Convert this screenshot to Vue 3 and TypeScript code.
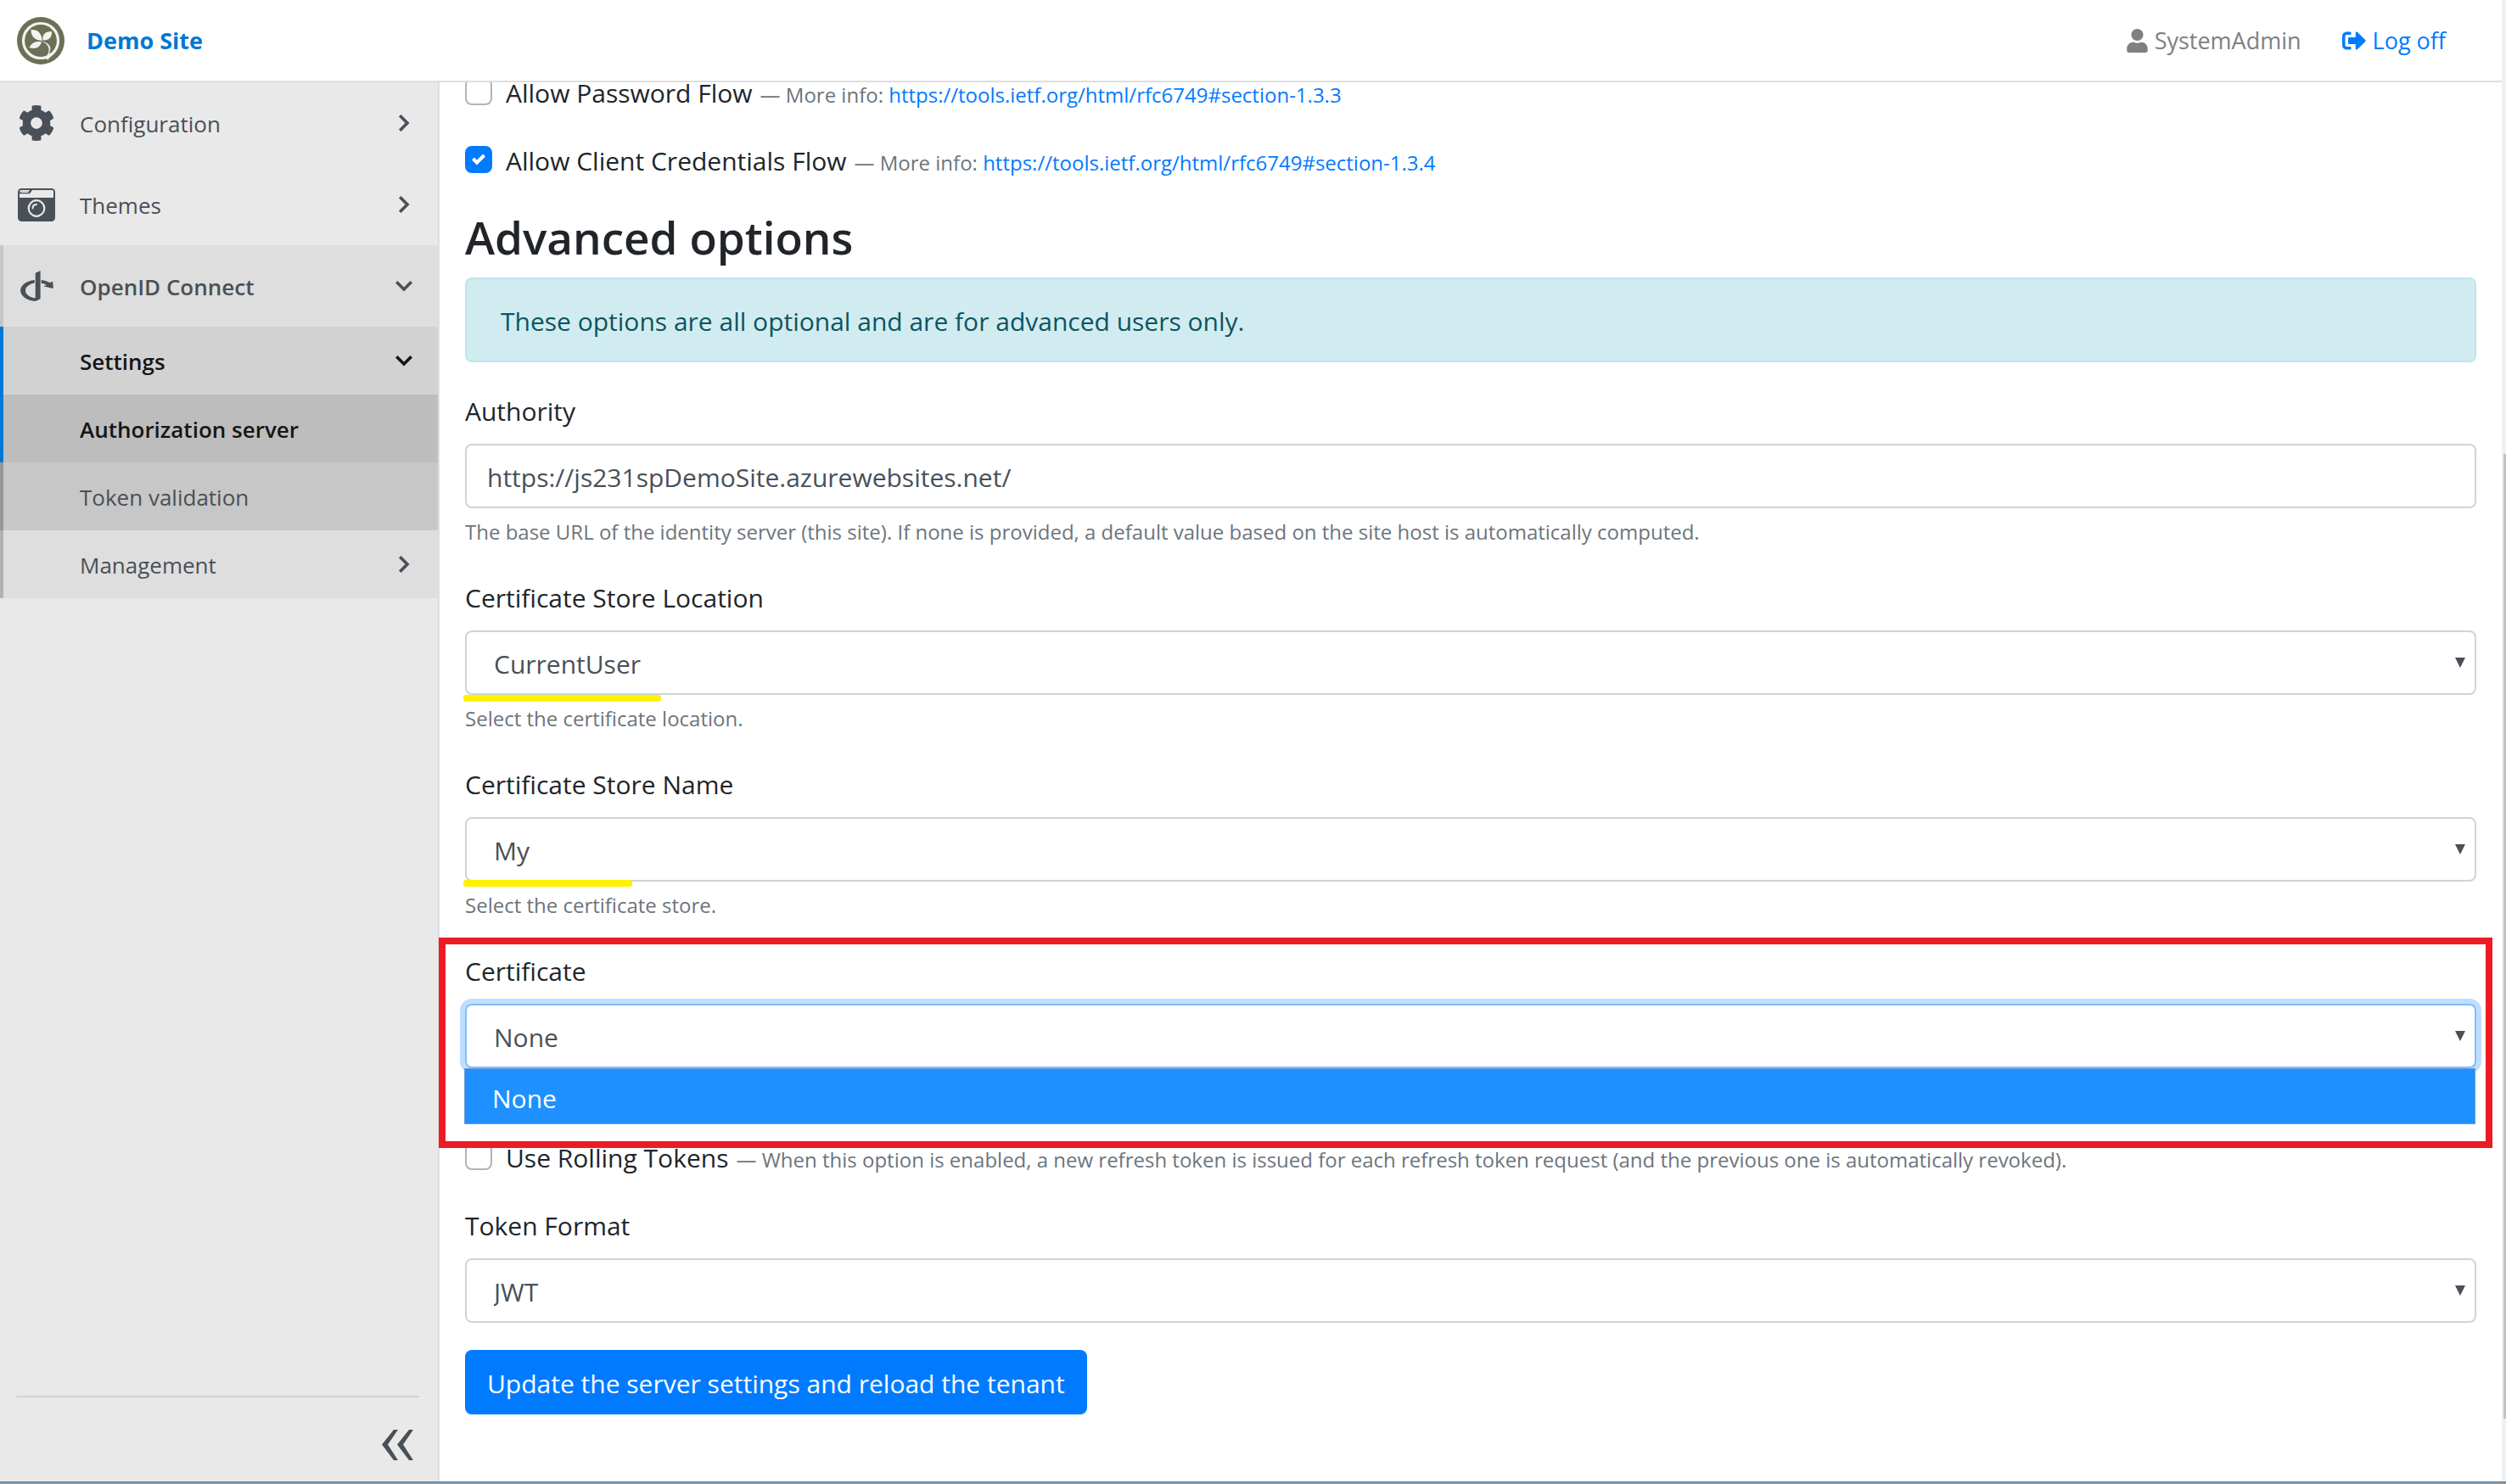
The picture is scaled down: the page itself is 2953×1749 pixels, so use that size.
<script setup lang="ts">
import { ref } from 'vue'

interface NavItem {
  label: string
  level: 'top' | 'sub' | 'leaf'
  icon?: 'gear' | 'camera' | 'openid'
  chevron?: 'right' | 'down'
  tone: string
}

interface Option {
  id: string
  label: string
  values: string[]
  hint?: string
  mark?: 'mark-wide' | 'mark-short'
}

const nav: NavItem[] = [
  { label: 'Configuration', level: 'top', icon: 'gear', chevron: 'right', tone: 'plain' },
  { label: 'Themes', level: 'top', icon: 'camera', chevron: 'right', tone: 'plain' },
  { label: 'OpenID Connect', level: 'top', icon: 'openid', chevron: 'down', tone: 'open' },
  { label: 'Settings', level: 'sub', chevron: 'down', tone: 'active' },
  { label: 'Authorization server', level: 'leaf', tone: 'current' },
  { label: 'Token validation', level: 'leaf', tone: 'sibling' },
  { label: 'Management', level: 'sub', chevron: 'right', tone: 'muted' },
]

const stores: Option[] = [
  { id: 'store-location', label: 'Certificate Store Location', values: ['CurrentUser', 'LocalMachine'], hint: 'Select the certificate location.', mark: 'mark-wide' },
  { id: 'store-name', label: 'Certificate Store Name', values: ['My', 'Root'], hint: 'Select the certificate store.', mark: 'mark-short' },
]

const passwordFlow = ref(false)
const clientFlow = ref(true)
const rolling = ref(false)
const authority = ref('https://js231spDemoSite.azurewebsites.net/')
</script>

<template>
  <div class="window">
    <div class="app">
      <header class="topbar">
        <a class="brand" href="#">
          <svg class="logo" viewBox="0 0 56 56" aria-hidden="true">
            <circle cx="28" cy="28" r="28" fill="#6b7056" />
            <circle cx="28" cy="28" r="20.5" fill="none" stroke="#f1f4ee" stroke-width="3.2" />
            <path d="M29.5 28C20 27.500 16.500 22 16.500 15C24 14.500 29.500 19 29.500 28Z" fill="#f1f4ee" />
            <path d="M30.500 27.500C29.500 21 33 17 41 17C41.500 24 37.500 28 30.500 27.500Z" fill="#f1f4ee" />
            <path d="M29 29.500C27 36 22 38.500 14.500 36C17.500 30.500 22 28 29 29.500Z" fill="#f1f4ee" />
            <path d="M29 28.500C38 30 42 36 37.500 43.500L44 41L36 51L34 47C40 40 39 33 29 28.500Z" fill="#f1f4ee" />
          </svg>
          <span>Demo Site</span>
        </a>
        <div class="account">
          <span class="user">
            <svg width="25" height="28" viewBox="0 0 448 512" fill="currentColor" aria-hidden="true"><path d="M224 256c70.700 0 128-57.300 128-128S294.700 0 224 0 96 57.300 96 128s57.300 128 128 128zm89.600 32h-16.700c-22.200 10.200-46.900 16-72.900 16s-50.600-5.800-72.900-16h-16.700C60.200 288 0 348.200 0 422.400V464c0 26.500 21.500 48 48 48h352c26.500 0 48-21.500 48-48v-41.600c0-74.200-60.200-134.400-134.400-134.400z" /></svg>
            SystemAdmin
          </span>
          <a class="logoff" href="#">
            <svg width="28" height="28" viewBox="0 0 512 512" fill="currentColor" aria-hidden="true"><path d="M497 273L329 441c-15 15-41 4.500-41-17v-96H152c-13.300 0-24-10.700-24-24v-96c0-13.300 10.700-24 24-24h136V88c0-21.400 25.900-32 41-17l168 168c9.300 9.400 9.300 24.600 0 34zM192 436v-40c0-6.600-5.400-12-12-12H96c-17.700 0-32-14.300-32-32V160c0-17.700 14.300-32 32-32h84c6.600 0 12-5.400 12-12V76c0-6.600-5.400-12-12-12H96c-53 0-96 43-96 96v192c0 53 43 96 96 96h84c6.600 0 12-5.400 12-12z" /></svg>
            Log off
          </a>
        </div>
      </header>

      <div class="body">
        <aside class="sidebar">
          <nav>
            <a v-for="item in nav" :key="item.label" href="#" class="item" :class="[item.level, item.tone]">
              <span class="glyph">
                <svg v-if="item.icon === 'gear'" width="42" height="42" viewBox="8 8 496 496" fill="currentColor" aria-hidden="true"><path d="M487.400 315.700l-42.600-24.600c4.300-23.200 4.300-47 0-70.200l42.600-24.600c4.900-2.800 7.100-8.600 5.500-14-11.100-35.600-30-67.800-54.700-94.600-3.800-4.100-10-5.100-14.800-2.300L380.800 110c-17.900-15.400-38.500-27.300-60.800-35.100V25.800c0-5.600-3.900-10.500-9.400-11.700-36.700-8.200-74.300-7.800-109.200 0-5.500 1.200-9.400 6.100-9.400 11.700V75c-22.200 7.900-42.800 19.800-60.800 35.100L88.700 85.500c-4.900-2.800-11-1.900-14.800 2.300-24.700 26.700-43.600 58.900-54.700 94.600-1.700 5.400.6 11.200 5.500 14L67.300 221c-4.300 23.200-4.300 47 0 70.200l-42.600 24.600c-4.900 2.800-7.100 8.600-5.500 14 11.100 35.600 30 67.800 54.700 94.600 3.800 4.100 10 5.100 14.800 2.300l42.600-24.600c17.900 15.400 38.500 27.300 60.800 35.100v49.200c0 5.600 3.900 10.500 9.400 11.700 36.700 8.200 74.300 7.800 109.200 0 5.500-1.200 9.400-6.100 9.400-11.700v-49.200c22.200-7.900 42.800-19.800 60.800-35.100l42.600 24.600c4.900 2.800 11 1.900 14.800-2.300 24.700-26.700 43.600-58.900 54.700-94.600 1.500-5.500-.7-11.300-5.600-14.100zM256 336c-44.100 0-80-35.900-80-80s35.900-80 80-80 80 35.900 80 80-35.900 80-80 80z" /></svg>
                <svg v-else-if="item.icon === 'camera'" width="44" height="39" viewBox="0 0 44 39" aria-hidden="true">
                  <rect width="44" height="39" rx="4.500" fill="#495057" />
                  <path d="M4 2H40Q42 2 42 4V11H2V4Q2 2 4 2Z" fill="#e9e9e9" />
                  <path d="M2 6.300H14L17 2H14L13 3.500H4L2 4.500Z" fill="#495057" />
                  <path d="M3.500 3.500H13L12 5H3.500Z" fill="#e9e9e9" />
                  <circle cx="22" cy="23.500" r="9.300" fill="none" stroke="#e9e9e9" stroke-width="2.200" />
                  <path d="M17.500 23.500Q17.500 19 22 19" fill="none" stroke="#e9e9e9" stroke-width="2" stroke-linecap="round" />
                </svg>
                <svg v-else-if="item.icon === 'openid'" width="39" height="36" viewBox="0 48 448 416" fill="currentColor" aria-hidden="true"><path d="M271.500 432l-68 32C88.500 453.700 0 392.500 0 318.200c0-71.500 82.500-131 191.700-144.300v43c-71.500 12.500-124 53-124 101.300 0 51 58.500 93.300 135.700 103v-340l68-33.200v384zM448 291l-131.300-28.500 36.800-20.700c-19.500-11.500-43.500-20-70-24.800v-43c46.200 5.500 87.700 19.500 120.300 39.300l35-19.800L448 291z" /></svg>
              </span>
              <span class="text">{{ item.label }}</span>
              <svg v-if="item.chevron" class="chevron" :class="item.chevron" width="20" height="20" viewBox="0 0 20 20" fill="none" stroke="currentColor" stroke-width="3.600" stroke-linecap="square" aria-hidden="true">
                <path v-if="item.chevron === 'right'" d="M6.500 2.500L14 10L6.500 17.500" />
                <path v-else d="M2.500 6.500L10 14L17.500 6.500" />
              </svg>
            </a>
          </nav>
          <div class="collapse">
            <button type="button" aria-label="Collapse menu">
              <svg width="37" height="36" viewBox="0 0 37 36" fill="#495057" aria-hidden="true"><path d="M14 0H19L7 17.500L19 36H14L0 17.500ZM32 0H37L25 17.500L37 36H32L18 17.500Z" /></svg>
            </button>
          </div>
        </aside>

        <main class="content">
          <form @submit.prevent>
            <div class="check-row">
              <span class="box"><input id="pw" v-model="passwordFlow" type="checkbox" /></span>
              <label for="pw">Allow Password Flow</label>
              <span class="hint">— More info: <a href="https://tools.ietf.org/html/rfc6749#section-1.3.3">https://tools.ietf.org/html/rfc6749#section-1.3.3</a></span>
            </div>
            <div class="check-row">
              <span class="box">
                <input id="cc" v-model="clientFlow" type="checkbox" />
                <svg v-if="clientFlow" width="16" height="16" viewBox="0 0 8 8" fill="#fff" aria-hidden="true"><path d="M6.564.75l-3.590 3.612-1.538-1.550L0 4.260 2.974 7.250 8 2.193z" /></svg>
              </span>
              <label for="cc">Allow Client Credentials Flow</label>
              <span class="hint">— More info: <a href="https://tools.ietf.org/html/rfc6749#section-1.3.4">https://tools.ietf.org/html/rfc6749#section-1.3.4</a></span>
            </div>

            <h3>Advanced options</h3>
            <div class="alert" role="alert">These options are all optional and are for advanced users only.</div>

            <div class="group">
              <label for="authority">Authority</label>
              <input id="authority" v-model="authority" class="control" type="text" />
              <p class="hint">The base URL of the identity server (this site). If none is provided, a default value based on the site host is automatically computed.</p>
            </div>

            <div v-for="store in stores" :key="store.id" class="group">
              <label :for="store.id">{{ store.label }}</label>
              <div class="picker">
                <select :id="store.id" class="control">
                  <option v-for="value in store.values" :key="value">{{ value }}</option>
                </select>
                <svg class="arrow" width="12" height="12" viewBox="0 0 12 12" aria-hidden="true"><path d="M0 0H12L6 12Z" fill="#495057" /></svg>
                <span class="mark" :class="store.mark"></span>
              </div>
              <p class="hint">{{ store.hint }}</p>
            </div>

            <div class="group framed">
              <label for="certificate">Certificate</label>
              <div class="picker">
                <select id="certificate" class="control focused">
                  <option>None</option>
                </select>
                <svg class="arrow" width="12" height="12" viewBox="0 0 12 12" aria-hidden="true"><path d="M0 0H12L6 12Z" fill="#495057" /></svg>
                <div class="menu" role="listbox" aria-label="Certificate">
                  <div role="option" aria-selected="true">None</div>
                </div>
              </div>
            </div>

            <div class="check-row">
              <span class="box"><input id="rolling" v-model="rolling" type="checkbox" /></span>
              <label for="rolling">Use Rolling Tokens</label>
              <span class="hint">— When this option is enabled, a new refresh token is issued for each refresh token request (and the previous one is automatically revoked).</span>
            </div>

            <div class="group">
              <label for="format">Token Format</label>
              <div class="picker">
                <select id="format" class="control">
                  <option>JWT</option>
                  <option>Encrypted</option>
                </select>
                <svg class="arrow" width="12" height="12" viewBox="0 0 12 12" aria-hidden="true"><path d="M0 0H12L6 12Z" fill="#495057" /></svg>
              </div>
            </div>

            <button class="submit" type="submit">Update the server settings and reload the tenant</button>
          </form>
        </main>
      </div>
    </div>
    <div class="scrollbar" aria-hidden="true">
      <div class="before"></div>
      <div class="thumb"></div>
      <div class="after"></div>
    </div>
  </div>
</template>

<style>
body {
  margin: 0;
  overflow: hidden;
}
</style>

<style scoped>
* {
  box-sizing: border-box;
}

.window {
  display: flex;
  height: 100vh;
  border-bottom: 2px solid #999;
  box-shadow: inset 0 -1px #1e87d9;
  padding-bottom: 1px;
  font-family: 'Open Sans', 'Noto Sans', sans-serif;
  font-size: 30px;
  line-height: 48px;
  color: #212529;
  background: #fff;
}

a {
  color: #007bff;
  text-decoration: none;
}

.app {
  flex: 1;
  min-width: 0;
  display: flex;
  flex-direction: column;
}

.topbar {
  flex: none;
  position: relative;
  z-index: 2;
  display: flex;
  align-items: center;
  justify-content: space-between;
  height: 97px;
  padding: 0 66px 0 20px;
  border-bottom: 2px solid #dedede;
  background: #fff;
  font-size: 27px;
}

.brand,
.account,
.user,
.logoff {
  display: flex;
  align-items: center;
}

.brand {
  gap: 26px;
  color: #0078d4;
  font-weight: 700;
}

.logo {
  width: 56px;
  height: 56px;
}

.account {
  gap: 48px;
}

.user,
.logoff {
  gap: 8px;
}

.user {
  color: #808080;
}

.body {
  flex: 1;
  min-height: 0;
  display: flex;
}

.sidebar {
  flex: none;
  width: 518px;
  display: flex;
  flex-direction: column;
  justify-content: space-between;
  border-right: 2px solid #dedede;
  background: #e9e9e9;
}

.item {
  display: flex;
  align-items: center;
  height: 80px;
  padding-right: 30px;
  border-left: 4px solid transparent;
  color: #495057;
  font-size: 26px;
}

.item.top {
  height: 96px;
}

.glyph {
  flex: none;
  display: flex;
  justify-content: center;
  width: 78px;
  margin-right: 12px;
}

.glyph svg {
  flex: none;
}

.text {
  flex: 1;
  padding-top: 2px;
}

.open {
  border-left-color: #c6c6c6;
  background: #dedede;
  font-weight: 600;
}

.active {
  border-left-color: #0078d4;
  background: #d2d2d2;
  color: #151515;
  font-weight: 600;
}

.current {
  border-left-color: #0078d4;
  background: #bdbdbd;
  color: #151515;
  font-weight: 600;
}

.sibling {
  border-left-color: #969696;
  background: #c7c7c7;
}

.muted {
  border-left-color: #b1b1b1;
  background: #dedede;
}

.collapse {
  display: flex;
  justify-content: flex-end;
  height: 101px;
  margin: 0 22px 0 19px;
  padding: 38px 7px 0 0;
  border-top: 2px solid #d2d2d2;
}

.collapse button {
  display: flex;
  align-items: flex-start;
  padding: 0;
  border: 0;
  background: none;
}

.content {
  flex: 1;
  min-width: 0;
  padding: 0 30px;
}

form {
  margin-top: -13px;
}

.check-row {
  display: flex;
  align-items: baseline;
  padding-top: 2px;
  margin-bottom: 30px;
  white-space: nowrap;
}

.check-row label {
  margin: 0 9px 0 16px;
}

.box {
  align-self: flex-start;
  display: grid;
  place-items: center;
  padding-top: 6px;
}

.box > * {
  grid-area: 1 / 1;
}

.box input {
  appearance: none;
  width: 32px;
  height: 32px;
  margin: 0;
  border: 2px solid #adb5bd;
  border-radius: 8px;
  background: #fff;
}

.box input:checked {
  border-color: #007bff;
  background: #007bff;
}

.box svg {
  pointer-events: none;
}

.hint {
  margin: 0;
  font-size: 24px;
  line-height: 40px;
  color: #6c757d;
}

h3 {
  margin: 0 0 14px;
  padding-top: 2px;
  font-size: 53px;
  font-weight: 600;
  line-height: 67px;
}

.alert {
  margin-bottom: 32px;
  padding: 26px 40px 22px;
  border: 2px solid #bee5eb;
  border-radius: 8px;
  background: #d1ecf1;
  color: #0c5460;
}

.group {
  margin-bottom: 32px;
}

.group label {
  display: block;
  padding-top: 2px;
  margin-bottom: 14px;
}

.group .hint {
  margin-top: 8px;
}

.control {
  display: block;
  appearance: none;
  width: 100%;
  height: 76px;
  margin: 0;
  padding: 3px 24px 0;
  border: 2px solid #ced4da;
  border-radius: 8px;
  outline: 0;
  background: #fff;
  color: #495057;
  font: inherit;
}

select.control {
  padding-left: 32px;
}

.focused {
  border-color: #80bdff;
  box-shadow: 0 0 0 6px #bfdeff;
}

.picker {
  position: relative;
}

.arrow {
  position: absolute;
  top: 32px;
  right: 13px;
  pointer-events: none;
}

.mark {
  position: absolute;
  top: 76px;
  left: -2px;
  height: 8px;
  border-radius: 3px;
  background: #fff200;
}

.mark-wide {
  width: 233px;
}

.mark-short {
  top: 74px;
  width: 199px;
}

.framed {
  position: relative;
  height: 188px;
}

.framed::after {
  content: '';
  position: absolute;
  inset: -14px -19px -46px -31px;
  border: 8px solid #ed1c24;
  pointer-events: none;
  z-index: 1;
}

.menu {
  position: absolute;
  top: 76px;
  left: -1px;
  right: 1px;
  height: 66px;
  padding: 0 32px;
  border: 1px solid #6f9bd1;
  background: #1e90ff;
  color: #fff;
  line-height: 70px;
}

.submit {
  height: 76px;
  padding: 3px 26px 0;
  border: 0;
  border-radius: 8px;
  background: #007bff;
  color: #fff;
  font: inherit;
}

.scrollbar {
  flex: none;
  width: 5px;
  display: flex;
  flex-direction: column;
  background: #f0f0f0;
}

.before {
  flex: 535;
}

.thumb {
  flex: 1137;
  margin-left: 2px;
  background: #c1c1c1;
}

.after {
  flex: 74;
}
</style>
